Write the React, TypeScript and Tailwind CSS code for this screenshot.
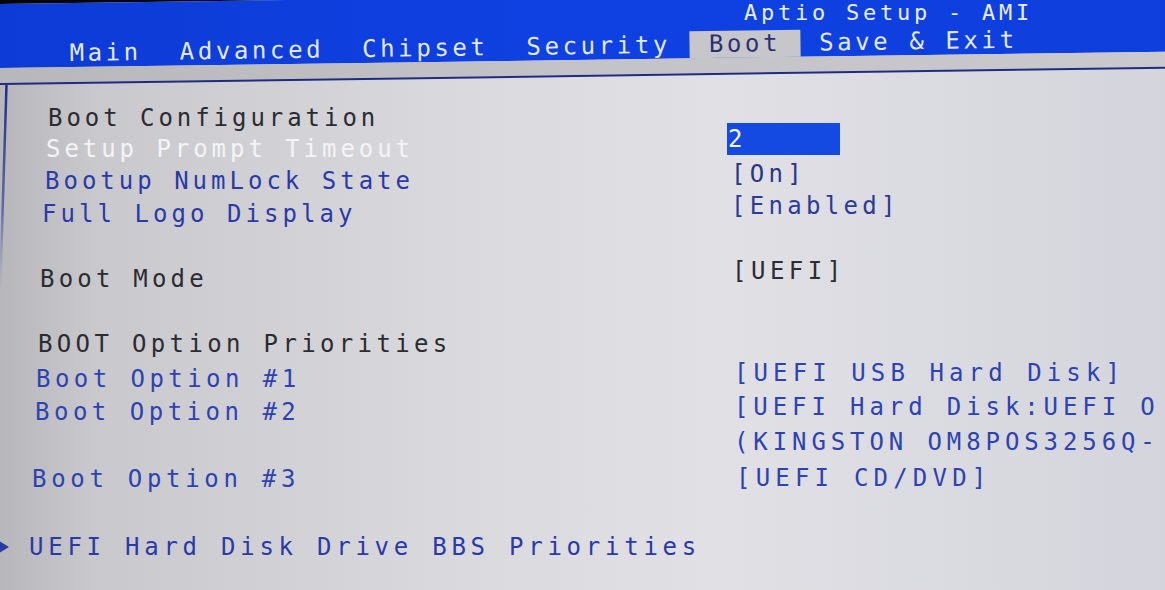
import React from "react";

const mono = "font-['DejaVu_Sans_Mono','Liberation_Mono',monospace]";

type Tab = { label: string; active?: boolean };
const tabs: Tab[] = [
  { label: "Main" },
  { label: "Advanced" },
  { label: "Chipset" },
  { label: "Security" },
  { label: "Boot", active: true },
  { label: "Save & Exit" },
];

function Header() {
  return (
    <div className="w-[1220px] shrink-0 -rotate-[0.8deg] origin-bottom-left">
      <div className="h-[4px] bg-[linear-gradient(90deg,#050507_0%,#0b0c18_50%,#0d2a9a_100%)]" />
      <div className="h-[64px] bg-[linear-gradient(90deg,#0d3bd6_0%,#0f41e2_50%,#0e3fdc_100%)] flex flex-col justify-end">
        <div className="flex h-[27px] pl-[51px]">
          {tabs.map((t) => (
            <div
              key={t.label}
              className={`${mono} px-[19px] text-[24px] leading-[27px] tracking-[3.6px] whitespace-pre ${
                t.active ? "bg-[#c6c6cb] text-[#2a2f72]" : "text-[#e3e9f7]"
              }`}
            >
              {t.label}
            </div>
          ))}
        </div>
      </div>
      <div className="h-[15px] bg-[linear-gradient(90deg,#b8b8bc_0%,#c4c4c8_50%,#c9c9ce_100%)]" />
      <div className="h-[2px] bg-[#1f2b7e]" />
    </div>
  );
}

type Row = { text: string; pl: string; h: string; color: string; track: string };

const DARK = "text-[#2b2b31]";
const BLUE = "text-[#2a3aa8]";
const BLUE2 = "text-[#2d43b2]";

const labels: Row[] = [
  { text: "Boot Configuration", pl: "pl-[48px]", h: "h-[31px]", color: DARK, track: "tracking-[3.95px]" },
  { text: "Setup Prompt Timeout", pl: "pl-[46px]", h: "h-[31.5px]", color: "text-[#f4f4f6]", track: "tracking-[3.95px]" },
  { text: "Bootup NumLock State", pl: "pl-[45px]", h: "h-[33px]", color: BLUE, track: "tracking-[4px]" },
  { text: "Full Logo Display", pl: "pl-[42px]", h: "h-[65.5px]", color: BLUE, track: "tracking-[4.05px]" },
  { text: "Boot Mode", pl: "pl-[40px]", h: "h-[64.5px]", color: DARK, track: "tracking-[4.2px]" },
  { text: "BOOT Option Priorities", pl: "pl-[38px]", h: "h-[35px]", color: DARK, track: "tracking-[4.35px]" },
  { text: "Boot Option #1", pl: "pl-[36px]", h: "h-[33px]", color: BLUE2, track: "tracking-[4.45px]" },
  { text: "Boot Option #2", pl: "pl-[35px]", h: "h-[67px]", color: BLUE2, track: "tracking-[4.5px]" },
  { text: "Boot Option #3", pl: "pl-[32px]", h: "h-[68px]", color: BLUE2, track: "tracking-[4.7px]" },
];

const values: Row[] = [
  { text: "[On]", pl: "ml-[41px]", h: "h-[32px]", color: "text-[#2a3488]", track: "tracking-[4.3px]" },
  { text: "[Enabled]", pl: "ml-[41px]", h: "h-[65px]", color: "text-[#2c3a9a]", track: "tracking-[4.3px]" },
  { text: "[UEFI]", pl: "ml-[42px]", h: "h-[102px]", color: "text-[#2c2c34]", track: "tracking-[4.5px]" },
  { text: "[UEFI USB Hard Disk]", pl: "ml-[44px]", h: "h-[34px]", color: BLUE2, track: "tracking-[5.1px]" },
  { text: "[UEFI Hard Disk:UEFI O", pl: "ml-[44px]", h: "h-[35px]", color: BLUE2, track: "tracking-[4.9px]" },
  { text: "(KINGSTON OM8POS3256Q-", pl: "ml-[44px]", h: "h-[36px]", color: BLUE2, track: "tracking-[4.9px]" },
  { text: "[UEFI CD/DVD]", pl: "ml-[46px]", h: "h-[32px]", color: BLUE2, track: "tracking-[5.2px]" },
];

export default function App() {
  return (
    <div className="relative w-[1165px] h-[590px] overflow-hidden flex flex-col bg-[linear-gradient(90deg,#b7b7bb_0%,#c9c9cd_8%,#dadade_40%,#e0e0e5_62%,#d4d5dc_100%)]">
      <Header />
      <div className={`${mono} absolute top-0 left-[744px] text-[22px] leading-[26px] tracking-[3.75px] text-[#e8eef9] whitespace-pre`}>
        Aptio Setup - AMI
      </div>
      <div className="relative flex flex-1">
        <svg className="absolute left-0 top-0" width="10" height="220" viewBox="0 0 10 220">
          <defs>
            <linearGradient id="bl" x1="0" y1="0" x2="0" y2="1">
              <stop offset="0%" stopColor="#1f2b86" stopOpacity="1" />
              <stop offset="60%" stopColor="#3a4aa0" stopOpacity="0.7" />
              <stop offset="100%" stopColor="#8a90b8" stopOpacity="0" />
            </linearGradient>
          </defs>
          <line x1="6.5" y1="0" x2="0" y2="210" stroke="url(#bl)" strokeWidth="2.5" />
        </svg>
        <div className={`${mono} w-[690px] shrink-0 pt-[17px] text-[24px] leading-[32px] whitespace-pre`}>
          {labels.map((r) => (
            <div key={r.text} className={`${r.h} ${r.pl} ${r.color} ${r.track}`}>
              {r.text}
            </div>
          ))}
          <div className={`h-[32px] flex items-center ${BLUE} tracking-[4.75px]`}>
            <svg width="9" height="14" viewBox="0 0 9 14" className="shrink-0">
              <polygon points="0,1.5 9,7 0,12.5" fill="#2a3aa8" />
            </svg>
            <span className="ml-[20px]">UEFI Hard Disk Drive BBS Priorities</span>
          </div>
        </div>
        <div className={`${mono} flex-1 min-w-0 pt-[38px] text-[24px] leading-[32px] whitespace-pre`}>
          <div className="h-[34.5px]">
            <div className="ml-[37px] w-[113px] h-[32px] bg-[#1449e2] text-[#f4f7ff] pl-[1px]">2</div>
          </div>
          {values.map((r) => (
            <div key={r.text} className={`${r.h} ${r.pl} ${r.color} ${r.track}`}>
              {r.text}
            </div>
          ))}
        </div>
      </div>
    </div>
  );
}
